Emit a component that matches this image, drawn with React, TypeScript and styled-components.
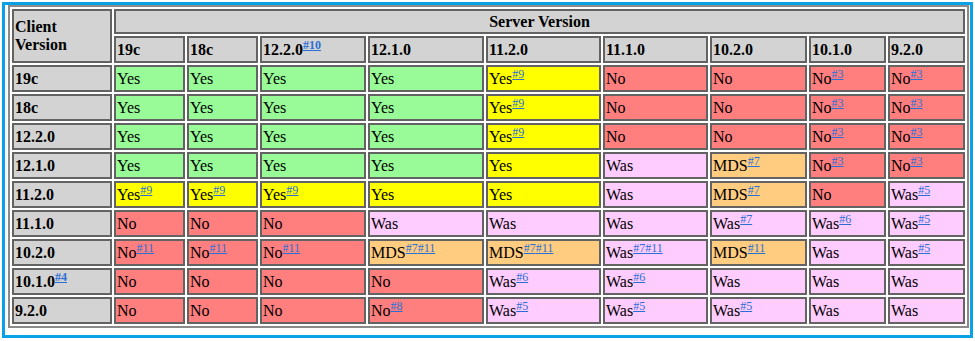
import React from "react";
import styled, { createGlobalStyle } from "styled-components";

const GlobalStyle = createGlobalStyle`
  html, body { margin: 0; padding: 0; background: #ffffff; }
  body { font-family: "Liberation Serif", "Times New Roman", serif; font-size: 16px; color: #000; }
`;

type Tone = "green" | "yellow" | "red" | "pink" | "orange";

const toneColor: Record<Tone, string> = {
  green: "#98fb98",
  yellow: "#ffff00",
  red: "#ff7f7f",
  pink: "#ffccff",
  orange: "#ffcc80",
};

const Frame = styled.div`
  box-sizing: border-box;
  width: 971px;
  margin: 2px 0 0 2px;
  border: 3px solid #0aa2e6;
  padding: 0 0 7px 3px;
`;

const Matrix = styled.table`
  table-layout: fixed;
  width: 961px;
  border: 2px solid #8a8a8a;
  border-spacing: 2px;
  font-family: "Liberation Serif", "Times New Roman", serif;
  font-size: 16px;
`;

const Row = styled.tr<{ $h: number }>`
  height: ${(p) => p.$h}px;
`;

const HeadCell = styled.th<{ $center?: boolean }>`
  background: #d3d3d3;
  border: 2px solid #636363;
  padding: 0 1px;
  text-align: ${(p) => (p.$center ? "center" : "left")};
  vertical-align: middle;
  font-weight: bold;
  color: #000;
  white-space: nowrap;
`;

const Cell = styled.td<{ $tone: Tone }>`
  background: ${(p) => toneColor[p.$tone]};
  border: 2px solid #636363;
  padding: 0 1px;
  text-align: left;
  vertical-align: middle;
  color: #000;
  white-space: nowrap;
`;

const Sup = styled.sup`
  font-size: 12px;
  line-height: 0;
  vertical-align: 6px;
`;

const NoteLink = styled.a`
  color: #2a6fd6;
  text-decoration: underline;
`;

const colWidths = [100, 71, 71, 106, 116, 115, 105, 97, 77, 77];

type Entry = [string, Tone, string?];

const Notes: React.FC<{ notes?: string }> = ({ notes }) => {
  if (!notes) return null;
  const parts = notes.split(" ");
  return (
    <Sup>
      {parts.map((n) => (
        <NoteLink key={n} href={`#note${n.slice(1)}`}>
          {n}
        </NoteLink>
      ))}
    </Sup>
  );
};

const servers: [string, string?][] = [
  ["19c"],
  ["18c"],
  ["12.2.0", "#10"],
  ["12.1.0"],
  ["11.2.0"],
  ["11.1.0"],
  ["10.2.0"],
  ["10.1.0"],
  ["9.2.0"],
];

const topRow: Entry[] = [
  ["Yes", "green"],
  ["Yes", "green"],
  ["Yes", "green"],
  ["Yes", "green"],
  ["Yes", "yellow", "#9"],
  ["No", "red"],
  ["No", "red"],
  ["No", "red", "#3"],
  ["No", "red", "#3"],
];

const rows: { client: string; note?: string; cells: Entry[] }[] = [
  { client: "19c", cells: topRow },
  { client: "18c", cells: topRow },
  { client: "12.2.0", cells: topRow },
  {
    client: "12.1.0",
    cells: [
      ["Yes", "green"],
      ["Yes", "green"],
      ["Yes", "green"],
      ["Yes", "green"],
      ["Yes", "yellow"],
      ["Was", "pink"],
      ["MDS", "orange", "#7"],
      ["No", "red", "#3"],
      ["No", "red", "#3"],
    ],
  },
  {
    client: "11.2.0",
    cells: [
      ["Yes", "yellow", "#9"],
      ["Yes", "yellow", "#9"],
      ["Yes", "yellow", "#9"],
      ["Yes", "yellow"],
      ["Yes", "yellow"],
      ["Was", "pink"],
      ["MDS", "orange", "#7"],
      ["No", "red"],
      ["Was", "pink", "#5"],
    ],
  },
  {
    client: "11.1.0",
    cells: [
      ["No", "red"],
      ["No", "red"],
      ["No", "red"],
      ["Was", "pink"],
      ["Was", "pink"],
      ["Was", "pink"],
      ["Was", "pink", "#7"],
      ["Was", "pink", "#6"],
      ["Was", "pink", "#5"],
    ],
  },
  {
    client: "10.2.0",
    cells: [
      ["No", "red", "#11"],
      ["No", "red", "#11"],
      ["No", "red", "#11"],
      ["MDS", "orange", "#7 #11"],
      ["MDS", "orange", "#7 #11"],
      ["Was", "pink", "#7 #11"],
      ["MDS", "orange", "#11"],
      ["Was", "pink"],
      ["Was", "pink", "#5"],
    ],
  },
  {
    client: "10.1.0",
    note: "#4",
    cells: [
      ["No", "red"],
      ["No", "red"],
      ["No", "red"],
      ["No", "red"],
      ["Was", "pink", "#6"],
      ["Was", "pink", "#6"],
      ["Was", "pink"],
      ["Was", "pink"],
      ["Was", "pink"],
    ],
  },
  {
    client: "9.2.0",
    cells: [
      ["No", "red"],
      ["No", "red"],
      ["No", "red"],
      ["No", "red", "#8"],
      ["Was", "pink", "#5"],
      ["Was", "pink", "#5"],
      ["Was", "pink", "#5"],
      ["Was", "pink"],
      ["Was", "pink"],
    ],
  },
];

export default function App() {
  return (
    <>
      <GlobalStyle />
      <Frame>
        <Matrix>
          <colgroup>
            {colWidths.map((w, i) => (
              <col key={i} style={{ width: w }} />
            ))}
          </colgroup>
          <thead>
            <Row $h={25}>
              <HeadCell rowSpan={2}>
                Client
                <br />
                Version
              </HeadCell>
              <HeadCell colSpan={9} $center>
                Server Version
              </HeadCell>
            </Row>
            <Row $h={27}>
              {servers.map(([name, note]) => (
                <HeadCell key={name}>
                  {name}
                  <Notes notes={note} />
                </HeadCell>
              ))}
            </Row>
          </thead>
          <tbody>
            {rows.map((r) => (
              <Row $h={27} key={r.client}>
                <HeadCell>
                  {r.client}
                  <Notes notes={r.note} />
                </HeadCell>
                {r.cells.map(([text, tone, note], i) => (
                  <Cell key={i} $tone={tone}>
                    {text}
                    <Notes notes={note} />
                  </Cell>
                ))}
              </Row>
            ))}
          </tbody>
        </Matrix>
      </Frame>
    </>
  );
}
